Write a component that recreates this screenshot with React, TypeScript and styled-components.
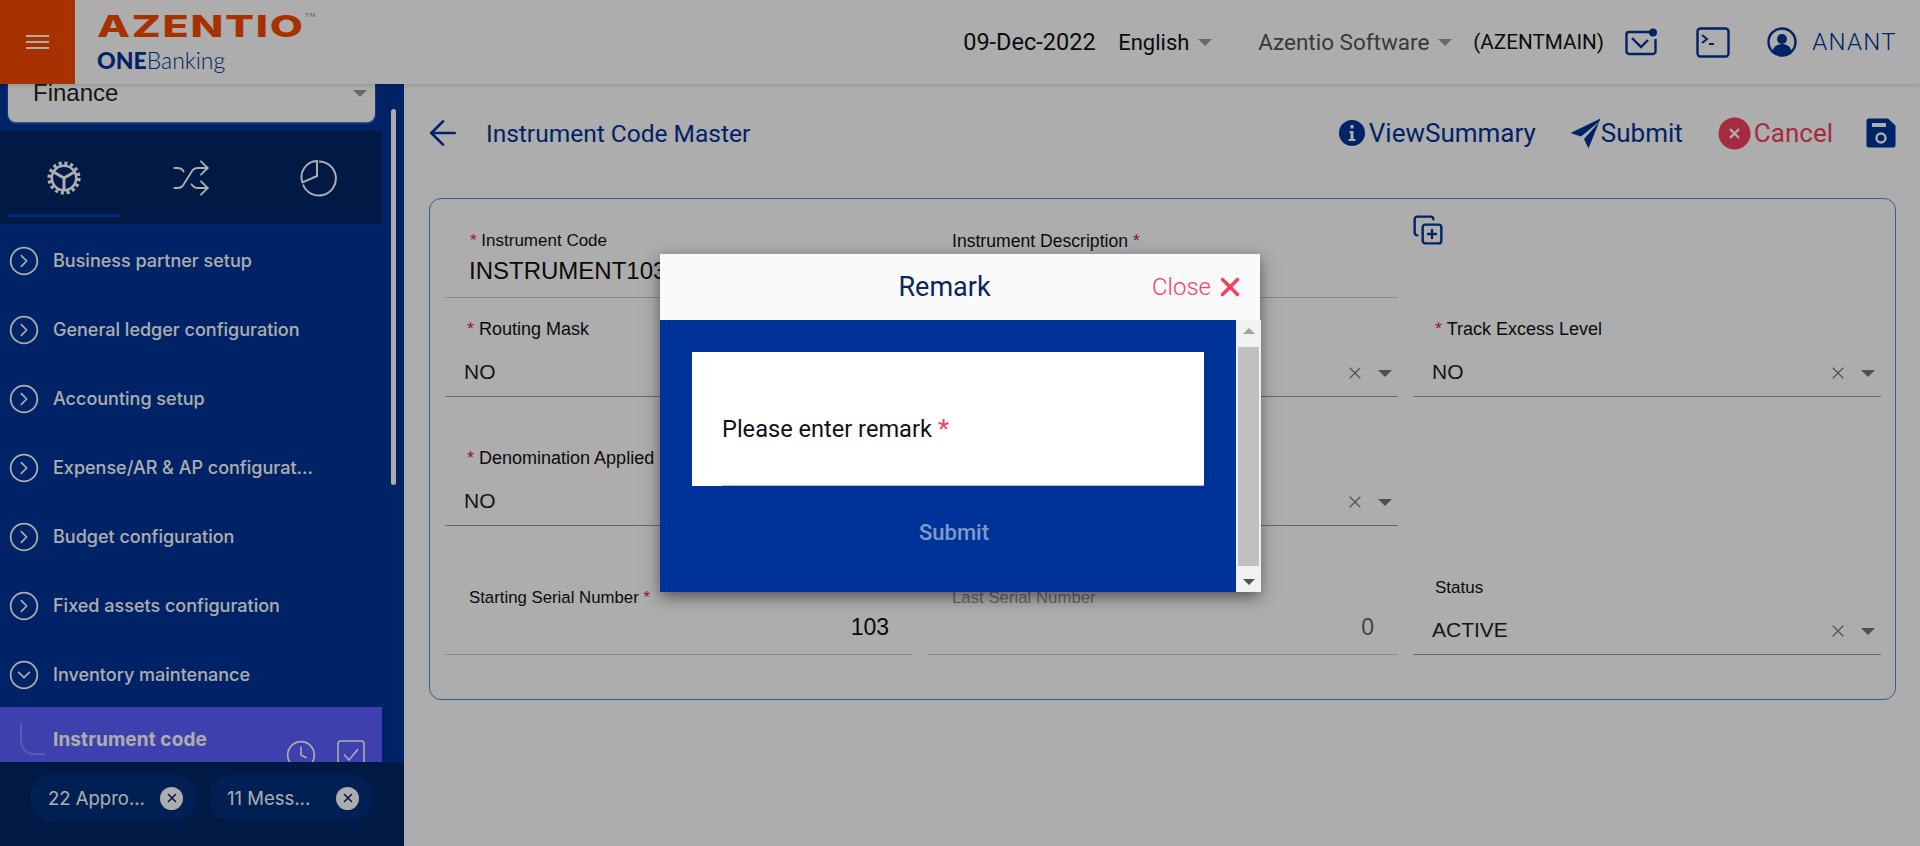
import React from 'react';
import styled, { createGlobalStyle } from 'styled-components';
import { CircleChevronRight, CircleChevronDown, Shuffle, Clock, ArrowLeft, X, CopyPlus } from 'lucide-react';

const Global = createGlobalStyle`
  html, body { margin: 0; padding: 0; height: 100%; background: #fff; }
  * { box-sizing: border-box; }
`;

const NAVY = '#003399';
const RED = '#f6405f';

const Page = styled.div`
  width: 100%; height: 846px; display: flex; flex-direction: column; overflow: hidden;
  position: relative; font-family: Roboto, "Liberation Sans", sans-serif;
`;
const Header = styled.header`
  height: 84px; flex: none; display: flex; align-items: center; background: #fff; position: relative; z-index: 2;
  box-shadow: 0 2px 4px rgba(0,0,0,.12);
`;
const Burger = styled.button`
  width: 75px; height: 84px; border: 0; background: #f74b00; padding: 0; display: flex; flex-direction: column;
  gap: 4px; align-items: center; justify-content: center;
  span { width: 23px; height: 2px; background: #fff; display: block; }
`;
const Logo = styled.div`
  margin-left: 22px; width: 300px; display: flex; flex-direction: column; gap: 3px; margin-top: -4px;
`;
const LogoMark = styled.div`
  font-family: Inter, sans-serif; font-weight: 800; font-size: 30px; line-height: 36px; color: #f74b00;
  letter-spacing: 1.2px; transform: scaleX(1.43); transform-origin: left; white-space: nowrap;
  sup { font-size: 5px; font-weight: 400; vertical-align: 20px; letter-spacing: 0; line-height: 0; color: #999; }
`;
const LogoSub = styled.div`
  font-family: Lato, sans-serif; font-size: 23px; line-height: 26px; color: ${NAVY}; font-weight: 300; white-space: nowrap;
  b { font-weight: 900; }
`;
const HeaderRight = styled.div`
  margin-left: auto; display: flex; align-items: center; padding-right: 23px; height: 100%;
`;
const HeadText = styled.span<{ $w: number; $c?: string; $s?: number }>`
  width: ${p => p.$w}px; color: ${p => p.$c || '#111'}; font-size: ${p => p.$s || 22}px; white-space: nowrap; flex: none;
`;
const Caret = styled.i<{ $mr: number }>`
  width: 0; height: 0; border-left: 7px solid transparent; border-right: 7px solid transparent;
  border-top: 7px solid #999; margin-right: ${p => p.$mr}px; margin-top: 0; flex: none;
`;
const HeadIcon = styled.svg<{ $mr: number }>` margin-right: ${p => p.$mr}px; flex: none; `;
const UserName = styled.span`
  font-size: 24px; font-weight: 300; color: ${NAVY}; letter-spacing: 1.3px; white-space: nowrap;
`;

const Body = styled.div` flex: 1; min-height: 0; display: flex; `;
const Sidebar = styled.aside`
  width: 404px; flex: none; background: ${NAVY}; display: flex; flex-direction: column; position: relative; overflow: hidden;
`;
const ModuleSelect = styled.div`
  margin: 0 29px 0 8px; height: 38px; flex: none; background: #fff; border-radius: 0 0 8px 8px; padding: 0 8px 0 25px;
  display: flex; align-items: flex-start; justify-content: space-between; font-size: 24px; line-height: 18px; color: #222;
  font-family: "Liberation Sans", sans-serif; box-shadow: 0 1px 2px rgba(255,255,255,.5);
`;
const SelectCaret = styled.i`
  width: 0; height: 0; border-left: 7px solid transparent; border-right: 7px solid transparent; border-top: 7px solid #999; margin-top: 6px;
`;
const Tabs = styled.div`
  margin-top: 9px; width: 382px; height: 93px; flex: none; background: #002666; display: grid; grid-template-columns: repeat(3, 1fr);
`;
const Tab = styled.div<{ $active?: boolean }>`
  display: flex; align-items: center; justify-content: center; color: #fff; position: relative;
  ${p => p.$active ? `&::after { content: ''; position: absolute; left: 8px; width: 112px; bottom: 7px; height: 3px; background: #003bb3; }` : ''}
`;
const Menu = styled.nav` padding-top: 2px; flex: 1; min-height: 0; overflow: hidden; `;
const MenuRow = styled.div`
  height: 69px; display: flex; align-items: center; padding-left: 8px; gap: 13px; color: #fff;
  font-family: Inter, sans-serif; font-size: 18px; font-weight: 500; white-space: nowrap;
`;
const ActiveRow = styled.div`
  width: 382px; height: 60px; background: #5a5fff; color: #fff; position: relative; margin-top: -2px;
  font-family: Inter, sans-serif; font-weight: 700; font-size: 19px; letter-spacing: 0.1px; padding: 22px 0 0 53px; line-height: 22px; display: flex;
`;
const Elbow = styled.span`
  position: absolute; left: 20px; top: 16px; width: 25px; height: 32px;
  border-left: 2px solid rgba(255,255,255,.25); border-bottom: 2px solid rgba(255,255,255,.25); border-bottom-left-radius: 14px;
`;
const RowAction = styled.span<{ $l: number }>`
  position: absolute; left: ${p => p.$l}px; top: 32px; color: #fff; display: flex;
`;
const Thumb = styled.div`
  position: absolute; left: 391px; top: 25px; width: 5px; height: 376px; background: #fff; border-radius: 3px;
`;
const Dock = styled.div`
  height: 84px; flex: none; background: #002666; display: flex; padding: 12px 0 0 30px; gap: 12px; position: relative;
`;
const Chip = styled.div<{ $w: number }>`
  width: ${p => p.$w}px; height: 48px; border-radius: 24px; background: #00307d; color: #fff; display: flex; align-items: center;
  justify-content: space-between; padding: 0 14px 0 18px; font-family: Inter, sans-serif; font-size: 18.500px;
`;
const ChipClose = styled.span`
  width: 23px; height: 23px; border-radius: 50%; background: #fff; display: flex; align-items: center; justify-content: center; color: #002666;
`;

const Main = styled.main` flex: 1; min-width: 0; background: #fff; padding: 0 24px 0 25px; `;
const TitleBar = styled.div`
  height: 114px; display: flex; align-items: center; padding-bottom: 16px;
`;
const Back = styled.span` display: flex; color: ${NAVY}; margin: 0 23px 0 -6px; `;
const Title = styled.h1` margin: 0; font-size: 24.500px; font-weight: 400; color: ${NAVY}; `;
const Actions = styled.div` margin-left: auto; display: flex; align-items: center; `;
const Action = styled.span<{ $c?: string; $mr: number; $gap?: number }>`
  display: flex; align-items: center; gap: ${p => p.$gap ?? 3}px; font-size: 26px; color: ${p => p.$c || NAVY}; margin-right: ${p => p.$mr}px;
`;
const Card = styled.section`
  height: 502px; border: 1px solid #4f8ae0; border-radius: 12px; padding: 1px 15px 0; position: relative;
  display: grid; grid-template-columns: 468px 470px 468px; column-gap: 15px; grid-template-rows: 98px 99px 129px 129px;
`;
const Field = styled.div`
  display: flex; flex-direction: column; justify-content: flex-end; border-bottom: 1px solid #999; min-width: 0; position: relative;
`;
const SoftField = styled(Field)` border-bottom-color: #ccc; `;
const Label = styled.label<{ $ml: number; $gap: number; $muted?: boolean; $s?: number }>`
  display: block; font-family: "Liberation Sans", sans-serif; font-size: ${p => p.$s || 17}px; line-height: 20px; margin-left: ${p => p.$ml}px; margin-bottom: ${p => p.$gap}px;
  color: ${p => p.$muted ? '#999' : '#111'}; white-space: nowrap;
  em { color: #e0203f; font-style: normal; }
`;
const Value = styled.div<{ $h: number; $s?: number; $right?: boolean; $ml?: number; $c?: string }>`
  height: ${p => p.$h}px; display: flex; align-items: center; justify-content: ${p => p.$right ? 'flex-end' : 'flex-start'};
  padding: ${p => p.$right ? '0 24px 0 0' : `0 0 0 ${p.$ml ?? 19}px`};
  font-family: "Liberation Sans", sans-serif; font-size: ${p => p.$s || 21}px; color: ${p => p.$c || '#222'}; white-space: nowrap;
`;
const Clear = styled.span`
  position: absolute; right: 33px; bottom: 13px; display: flex; color: #777;
`;
const DownCaret = styled.i`
  position: absolute; right: 6px; bottom: 19px; width: 0; height: 0; border-left: 7px solid transparent; border-right: 7px solid transparent; border-top: 7px solid #777;
`;
const CopyBtn = styled.span`
  position: absolute; left: 982px; top: 15px; color: ${NAVY}; display: flex;
`;

const Overlay = styled.div`
  position: absolute; inset: 0; z-index: 10; background: rgba(0,0,0,.32); display: flex; align-items: center; justify-content: center;
`;
const Dialog = styled.div`
  width: 600px; height: 338px; background: ${NAVY}; display: flex; flex-direction: column;
  box-shadow: 0 5px 15px rgba(0,0,0,.5);
`;
const DialogHead = styled.div`
  height: 66px; flex: none; background: #fafafa; display: grid; grid-template-columns: 1fr auto 1fr; align-items: center; padding: 0 15px 0 0;
`;
const DialogTitle = styled.h2` grid-column: 2; margin: 0; font-size: 27px; font-weight: 400; color: #0a2560; transform: translateX(-8px); `;
const CloseBtn = styled.span`
  justify-self: end; display: flex; align-items: center; gap: 4px; font-size: 24px; font-weight: 300; color: ${RED};
`;
const DialogBody = styled.div` flex: 1; min-height: 0; display: flex; `;
const DialogContent = styled.div`
  flex: 1; padding: 32px 32px 0 32px; display: flex; flex-direction: column;
`;
const RemarkBox = styled.div`
  height: 134px; width: 512px; background: #fff; padding: 0 0 0 30px; flex: none;
`;
const RemarkInner = styled.div`
  height: 100%; display: flex; align-items: center; border-bottom: 1px solid #bbb; font-size: 23.600px; color: #111; padding-top: 20px;
  em { color: ${RED}; font-style: normal; margin-left: 6px; font-size: 26px; }
`;
const DialogSubmit = styled.div`
  margin-top: 34px; text-align: center; font-size: 22px; font-weight: 500; color: rgba(255,255,255,.5); padding-left: 12px;
`;
const Scrollbar = styled.div`
  width: 25px; flex: none; background: #f1f1f1; display: flex; flex-direction: column; align-items: center; justify-content: space-between; padding: 8px 2px 7px;
`;
const ScrollThumb = styled.div` width: 21px; height: 219px; background: #c1c1c1; `;
const ArrowUp = styled.i` width: 0; height: 0; border-left: 6px solid transparent; border-right: 6px solid transparent; border-bottom: 6px solid #a3a3a3; `;
const ArrowDown = styled.i` width: 0; height: 0; border-left: 6px solid transparent; border-right: 6px solid transparent; border-top: 6px solid #505050; `;

const items = ['Business partner setup', 'General ledger configuration', 'Accounting setup', 'Expense/AR & AP configurat...', 'Budget configuration', 'Fixed assets configuration'];

const Gear = () => (
  <svg width="36" height="36" viewBox="0 0 36 36" fill="none" stroke="currentColor">
    <circle cx="18" cy="18" r="14.800" strokeWidth="3.600" strokeDasharray="3.100 2.710" />
    <circle cx="18" cy="18" r="12.200" strokeWidth="2.600" />
    <path d="M18 18 L18 30 M18 18 L7.600 12 M18 18 L28.400 12" strokeWidth="3" />
  </svg>
);
const Pie = () => (
  <svg width="38" height="38" viewBox="0 0 38 38" fill="none" stroke="currentColor" strokeWidth="2">
    <path d="M20 2.500A17 17 0 1 1 4 25.500" />
    <path d="M18 2A16 16 0 0 0 3.500 23.500L18 17Z" />
  </svg>
);
const CheckBox = () => (
  <svg width="30" height="30" viewBox="0 0 30 30" fill="none" stroke="currentColor" strokeWidth="1.600">
    <rect x="2" y="2" width="26" height="26" rx="3" />
    <path d="M8 15.500l5 5.500 9-11" />
  </svg>
);

const SelectField = ({ label, value, star = true, labelMl = 22, gap = 9, labelSize = 18 }: { label: string; value: string; star?: boolean; labelMl?: number; gap?: number; labelSize?: number }) => (
  <Field>
    <Label $ml={labelMl} $gap={gap} $s={labelSize}>{star && <em>*</em>}{star && ' '}{label}</Label>
    <Value $h={48}>{value}</Value>
    <Clear><X size={20} strokeWidth={1.4} /></Clear>
    <DownCaret />
  </Field>
);

export default function App() {
  return (
    <Page>
      <Global />
      <Header>
        <Burger><span /><span /><span /></Burger>
        <Logo>
          <LogoMark>AZENTIO<sup>TM</sup></LogoMark>
          <LogoSub><b>ONE</b>Banking</LogoSub>
        </Logo>
        <HeaderRight>
          <HeadText $w={155} $s={23.500}>09-Dec-2022</HeadText>
          <HeadText $w={80}>English</HeadText>
          <Caret $mr={46} />
          <HeadText $w={180} $s={22.500} $c="#555">Azentio Software</HeadText>
          <Caret $mr={21} />
          <HeadText $w={152} $s={20.700}>(AZENTMAIN)</HeadText>
          <HeadIcon $mr={38} width="33" height="28" viewBox="0 0 33 28" fill="none" stroke={NAVY} strokeWidth="2.400">
            <path d="M24 4H4a2.500 2.500 0 0 0-2.500 2.500v17A2.500 2.500 0 0 0 4 26h24a2.500 2.500 0 0 0 2.500-2.500V11" />
            <path d="M7 10l9 9 7-7" />
            <circle cx="28" cy="4.500" r="4" fill={NAVY} stroke="none" />
          </HeadIcon>
          <HeadIcon $mr={37} width="34" height="31" viewBox="0 0 34 31" fill="none" stroke={NAVY} strokeWidth="2.400">
            <rect x="1.500" y="1.500" width="31" height="28" rx="3" />
            <path d="M6 8l5 4-5 4M13 17h5" strokeWidth="2" />
          </HeadIcon>
          <HeadIcon $mr={15} width="30" height="30" viewBox="0 0 30 30" fill="none" stroke={NAVY} strokeWidth="2.400">
            <circle cx="15" cy="15" r="13.500" />
            <circle cx="15" cy="12" r="5" fill={NAVY} stroke="none" />
            <path d="M5.500 24c1.500-5 5-7 9.500-7s8 2 9.500 7c-2.500 2.500-6 4-9.500 4s-7-1.500-9.500-4z" fill={NAVY} stroke="none" />
          </HeadIcon>
          <UserName>ANANT</UserName>
        </HeaderRight>
      </Header>
      <Body>
        <Sidebar>
          <ModuleSelect>Finance<SelectCaret /></ModuleSelect>
          <Tabs>
            <Tab $active><Gear /></Tab>
            <Tab><Shuffle size={40} strokeWidth={1.1} /></Tab>
            <Tab><Pie /></Tab>
          </Tabs>
          <Menu>
            {items.map(t => (
              <MenuRow key={t}><CircleChevronRight size={32} strokeWidth={1.3} />{t}</MenuRow>
            ))}
            <MenuRow><CircleChevronDown size={32} strokeWidth={1.3} />Inventory maintenance</MenuRow>
            <ActiveRow>
              <Elbow />Instrument code
              <RowAction $l={285}><Clock size={32} strokeWidth={1.2} /></RowAction>
              <RowAction $l={336}><CheckBox /></RowAction>
            </ActiveRow>
          </Menu>
          <Thumb />
          <Dock>
            <Chip $w={167}>22 Appro...<ChipClose><X size={14} strokeWidth={2.6} /></ChipClose></Chip>
            <Chip $w={164}>11 Mess...<ChipClose><X size={14} strokeWidth={2.6} /></ChipClose></Chip>
          </Dock>
        </Sidebar>
        <Main>
          <TitleBar>
            <Back><ArrowLeft size={40} strokeWidth={1.6} /></Back>
            <Title>Instrument Code Master</Title>
            <Actions>
              <Action $mr={34}>
                <svg width="28" height="28" viewBox="0 0 28 28"><circle cx="14" cy="14" r="13" fill={NAVY} /><path d="M11.500 12h4v8h2v2h-7v-2h2v-6h-1zM12.500 6h3v3.500h-3z" fill="#fff" /></svg>
                ViewSummary
              </Action>
              <Action $mr={35} $gap={0}>
                <svg width="31" height="31" viewBox="0 0 31 31"><path d="M30.500 0.500 L0.500 15 L11 18.500 L30 3 L14 21 L18.500 30.500 Z" fill={NAVY} /></svg>
                Submit
              </Action>
              <Action $mr={33} $c={RED}>
                <svg width="33" height="33" viewBox="0 0 33 33"><circle cx="16.500" cy="16.500" r="16" fill={RED} /><path d="M12 12l9 9M21 12l-9 9" stroke="#fff" strokeWidth="2.400" /></svg>
                Cancel
              </Action>
              <Action $mr={0}>
                <svg width="30" height="30" viewBox="0 0 30 30"><path d="M3 0.500h19l7.500 7v19.500a2.500 2.500 0 0 1-2.500 2.500H3a2.500 2.500 0 0 1-2.500-2.500V3A2.500 2.500 0 0 1 3 0.500z" fill={NAVY} /><rect x="6" y="5" width="14" height="4" fill="#fff" /><circle cx="15" cy="20" r="4.500" fill="none" stroke="#fff" strokeWidth="2.400" /></svg>
              </Action>
            </Actions>
          </TitleBar>
          <Card>
            <SoftField>
              <Label $ml={25} $gap={-6}><em>*</em> Instrument Code</Label>
              <Value $h={52} $s={24} $ml={24} $c="#111">INSTRUMENT103</Value>
            </SoftField>
            <SoftField>
              <Label $ml={24} $gap={-6} $s={17.600}>Instrument Description <em>*</em></Label>
              <Value $h={52}></Value>
            </SoftField>
            <div />
            <SelectField label="Routing Mask" value="NO" />
            <SelectField label="Routing Mask" value="NO" />
            <SelectField label="Track Excess Level" value="NO" />
            <SelectField label="Denomination Applied" value="NO" />
            <SelectField label="Denomination Applied" value="NO" />
            <div />
            <SoftField>
              <Label $ml={24} $gap={-8} $s={16.800}>Starting Serial Number <em>*</em></Label>
              <Value $h={54} $right $s={23} $c="#111">103</Value>
            </SoftField>
            <SoftField>
              <Label $ml={24} $gap={-8} $s={16.800} $muted>Last Serial Number</Label>
              <Value $h={54} $right $s={23} $c="#666">0</Value>
            </SoftField>
            <SelectField label="Status" value="ACTIVE" star={false} labelMl={22} gap={8} labelSize={17} />
            <CopyBtn><CopyPlus size={32} strokeWidth={1.8} /></CopyBtn>
          </Card>
        </Main>
      </Body>
      <Overlay>
        <Dialog>
          <DialogHead>
            <DialogTitle>Remark</DialogTitle>
            <CloseBtn>Close<X size={30} strokeWidth={2.8} /></CloseBtn>
          </DialogHead>
          <DialogBody>
            <DialogContent>
              <RemarkBox>
                <RemarkInner>Please enter remark<em>*</em></RemarkInner>
              </RemarkBox>
              <DialogSubmit>Submit</DialogSubmit>
            </DialogContent>
            <Scrollbar>
              <ArrowUp />
              <ScrollThumb />
              <ArrowDown />
            </Scrollbar>
          </DialogBody>
        </Dialog>
      </Overlay>
    </Page>
  );
}
